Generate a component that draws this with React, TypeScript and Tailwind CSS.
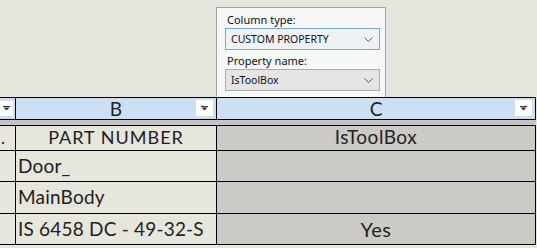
const Tri = () => (
  <svg width="7" height="5" viewBox="0 0 7 5" className="block">
    <rect x="0" y="0" width="7" height="1" fill="#333" />
    <path d="M0.5 1.5 L6.5 1.5 L3.5 4.5 Z" fill="#333" />
  </svg>
);

const Chevron = () => (
  <svg width="9" height="5" viewBox="0 0 9 5" className="block">
    <path d="M0.5 0.5 L4.5 4.5 L8.5 0.5" fill="none" stroke="#555" strokeWidth="1" />
  </svg>
);

const Combo = ({ text, active }: { text: string; active?: boolean }) => (
  <div
    className={
      active
        ? "flex h-[22px] w-[155px] items-center justify-between border border-[#7aa7d9] bg-[#eef2f7] pl-[5px] pr-[6px]"
        : "flex h-[22px] w-[155px] items-center justify-between border border-[#adadad] bg-[#e5e5e5] pl-[5px] pr-[6px]"
    }
  >
    <span className="text-[10.5px] leading-none text-[#111]">{text}</span>
    <Chevron />
  </div>
);

const rows = [
  { h: "h-[25px]", b: "PART NUMBER", c: "IsToolBox", center: true },
  { h: "h-[31px]", b: "Door_", c: "" },
  { h: "h-[32px]", b: "MainBody", c: "" },
  { h: "h-[31px]", b: "IS 6458 DC - 49-32-S", c: "Yes" },
];

export default function App() {
  return (
    <div className="h-[248px] w-[537px] overflow-hidden bg-[#e6e6dc] font-['Lato',sans-serif] text-[#222]">
      <div className="flex h-[97px]">
        <div className="ml-[216px] mt-[7px] flex h-[90px] w-[170px] flex-col border border-b-0 border-[#a5a5a5] bg-[#f7f7f7] pl-[8px] font-['Noto_Sans',sans-serif]">
          <div className="mt-[3px] h-[17px] pl-[2px] text-[11px] leading-[17px] text-[#111]">Column type:</div>
          <Combo text="CUSTOM PROPERTY" active />
          <div className="mt-[2px] h-[17px] pl-[2px] text-[11px] leading-[17px] text-[#111]">Property name:</div>
          <Combo text="IsToolBox" />
        </div>
      </div>

      <div className="w-[536px]">
        {/* header */}
        <div className="flex h-[23px] border-y border-black bg-[#cde0f3]">
          <div className="flex w-[16px] items-center border-r border-black">
            <div className="flex h-[15px] w-[13px] items-center justify-center bg-white">
              <Tri />
            </div>
          </div>
          <div className="relative flex w-[201px] items-center justify-center border-r border-black text-[19px] leading-none">
            B
            <div className="absolute right-[3px] top-[2px] flex h-[16px] w-[17px] items-center justify-center bg-white">
              <Tri />
            </div>
          </div>
          <div className="relative flex w-[319px] items-center justify-center border-r border-black text-[19px] leading-none">
            C
            <div className="absolute right-[3px] top-[2px] flex h-[16px] w-[17px] items-center justify-center bg-white">
              <Tri />
            </div>
          </div>
        </div>
        <div className="h-[6px] border-b border-black bg-[#c4c4c4]" />

        {rows.map((r, i) => (
          <div key={i} className={`flex border-b border-black ${r.h}`}>
            <div className="flex w-[16px] items-center border-r border-black pl-[1px] text-[17px]">
              {i === 0 ? "." : ""}
            </div>
            <div
              className={
                r.center
                  ? "flex w-[201px] items-center justify-center whitespace-nowrap border-r border-black pb-[2px] text-[18px] tracking-[1px]"
                  : "flex w-[201px] items-center whitespace-nowrap border-r border-black pl-[2px] text-[19px] tracking-[0.2px]"
              }
            >
              {r.b}
            </div>
            <div
              className={
                i === 0
                  ? "flex w-[319px] items-center justify-center border-r border-black bg-[#cbcac5] pb-[2px] text-[19px] tracking-[0.5px]"
                  : "flex w-[319px] items-center justify-center border-r border-black bg-[#cbcac5] text-[20px] tracking-[0.5px]"
              }
            >
              {r.c}
            </div>
          </div>
        ))}
      </div>
    </div>
  );
}
